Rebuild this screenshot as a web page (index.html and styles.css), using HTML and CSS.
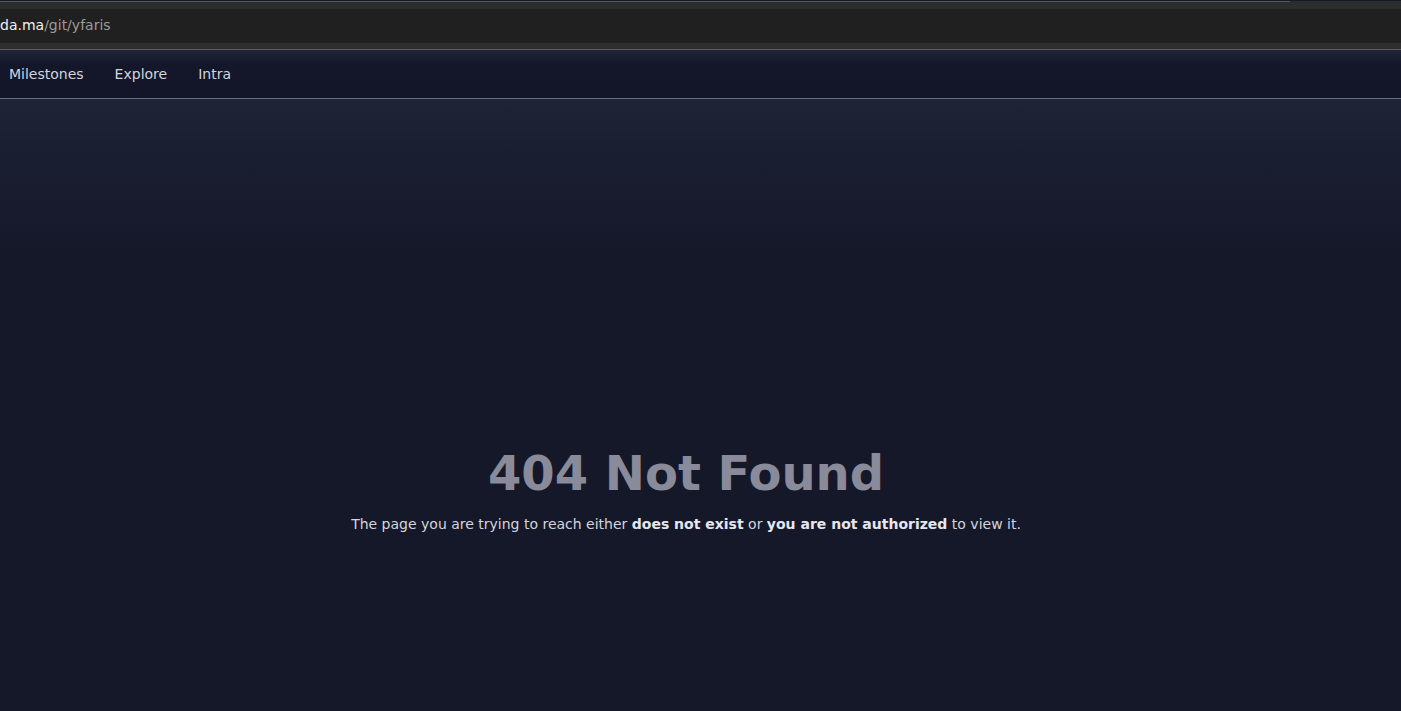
FILE: index.html
```html
<!DOCTYPE html>
<html lang="en">
<head>
<meta charset="utf-8">
<title>404 Not Found</title>
<link rel="stylesheet" href="styles.css">
</head>
<body>
<div class="browser">
  <div class="tabstrip"><div class="tabedge"></div></div>
  <div class="urlbar"><span class="host">da.ma</span><span class="path">/git/yfaris</span></div>
  <div class="toolbar-bottom"></div>
</div>
<nav class="nav">
  <a class="nav-item" href="#">Milestones</a>
  <a class="nav-item" href="#">Explore</a>
  <a class="nav-item" href="#">Intra</a>
</nav>
<main class="main">
  <h1 class="title">404 Not Found</h1>
  <p class="message">The page you are trying to reach either <strong>does not exist</strong> or <strong>you are not authorized</strong> to view it.</p>
</main>
</body>
</html>
```

FILE: styles.css
```css
html, body {
  margin: 0;
  padding: 0;
  height: 100%;
}
body {
  font-family: "DejaVu Sans", "Liberation Sans", sans-serif;
  background: #151829;
  overflow: hidden;
}
.browser {
  background: #2d2d2d;
}
.tabstrip {
  height: 8px;
  background: #2d2d2d;
}
.tabedge {
  width: 1290px;
  height: 1px;
  margin-top: 1px;
  background: #5a5a5a;
  border-radius: 0 0 2px 0;
}
.urlbar {
  height: 34px;
  background: #202020;
  display: flex;
  align-items: center;
  font-size: 14px;
  padding-bottom: 2px;
  box-sizing: border-box;
}
.host { color: #f2f2f2; }
.path { color: #9b9b9b; }
.toolbar-bottom {
  height: 6px;
  background: #2e2e2e;
  border-bottom: 1px solid #5c5c5c;
}
.nav {
  height: 49px;
  box-sizing: border-box;
  display: flex;
  align-items: center;
  gap: 31px;
  padding-left: 9px;
  background: linear-gradient(#20253a 0px, #141729 14px, #131628 100%);
  border-bottom: 1px solid #6b6d78;
}
.nav-item {
  color: #d2d5de;
  text-decoration: none;
  font-size: 14px;
}
.main {
  height: calc(100% - 99px);
  box-sizing: border-box;
  padding-top: 346px;
  padding-right: 29px;
  text-align: center;
  background: linear-gradient(#1f2436 0px, #1a1e31 60px, #151829 160px, #151829 100%);
}
.title {
  margin: 0;
  font-size: 48px;
  line-height: 56px;
  font-weight: bold;
  color: #8a8b9a;
}
.message {
  margin: 13px 0 0;
  font-size: 14px;
  line-height: 20px;
  color: #d3d5de;
}
.message strong {
  color: #e6e7ee;
}
```
